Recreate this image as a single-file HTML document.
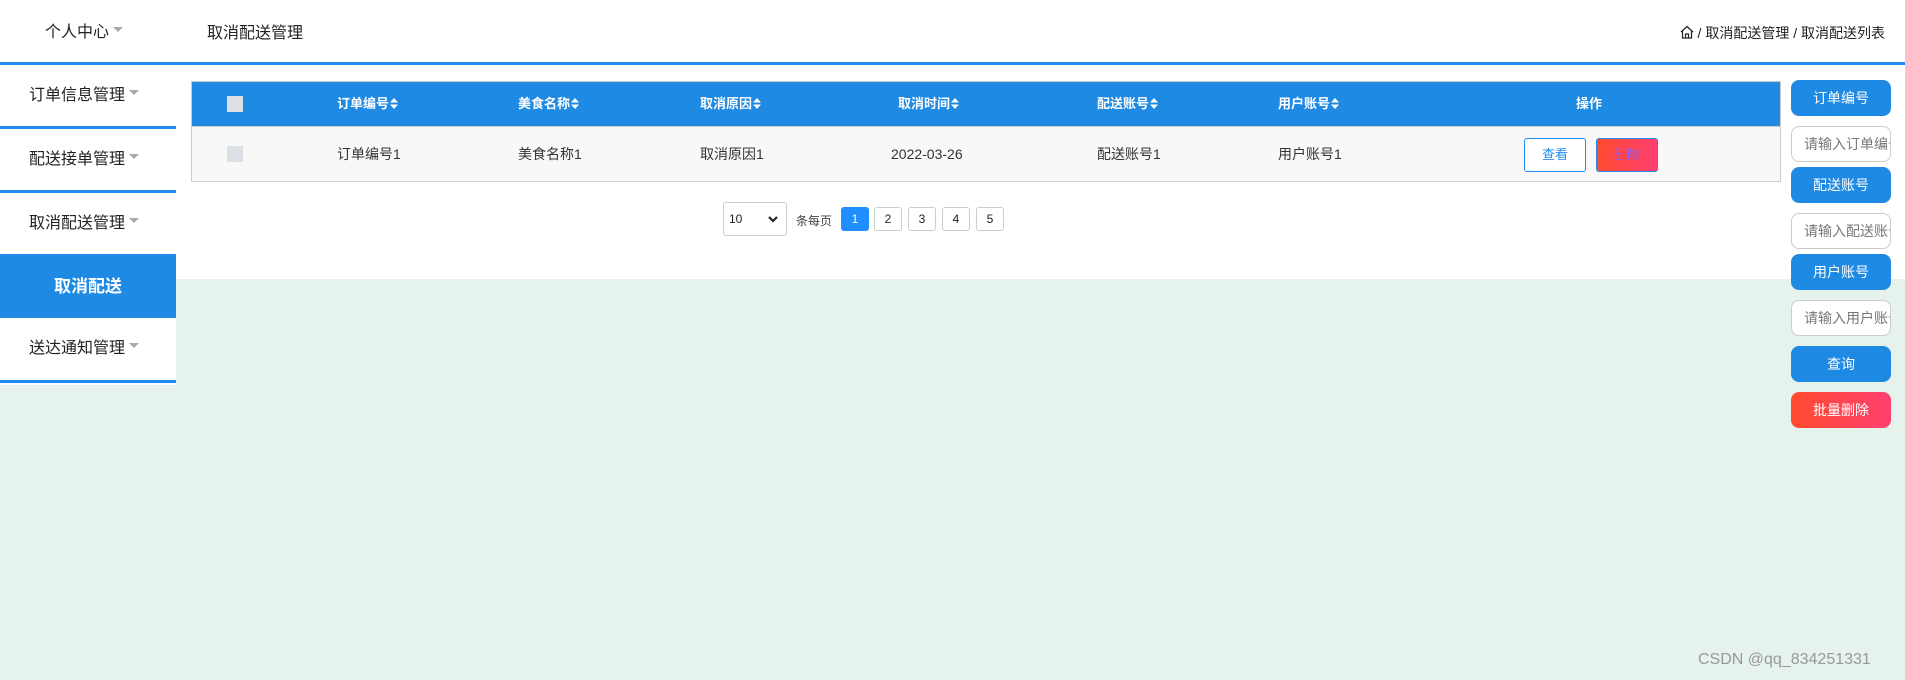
<!DOCTYPE html>
<html><head><meta charset="utf-8">
<style>
*{margin:0;padding:0;box-sizing:border-box}
body{width:1905px;height:680px;position:relative;background:#e6f2ec;font-family:"Liberation Sans","Noto Sans CJK SC",sans-serif;color:#333;overflow:hidden}
.a{position:absolute}
.tri{display:inline-block;width:0;height:0;border-left:5px solid transparent;border-right:5px solid transparent;border-top:5px solid #aaa;vertical-align:middle;margin-left:4px;position:relative;top:-3px}
.side{position:absolute;left:0;width:176px;height:64px;background:#fff;border-bottom:3px solid #1f8bf0;font-size:16px;color:#222;line-height:61px;padding-left:29px}
.th{position:absolute;top:81px;height:45px;line-height:45px;color:#fff;font-weight:bold;font-size:13px}
.td{position:absolute;top:127px;height:55px;line-height:55px;font-size:14px;color:#333}
.sort{display:inline-block;width:8px;height:11px;vertical-align:-1px;margin-left:1px}
.rb{position:absolute;left:1791px;width:100px;height:36px;border-radius:8px;background:#1f8ae3;color:#fff;font-size:14px;text-align:center;line-height:36px}
.ri{position:absolute;left:1791px;width:100px;height:36px;border-radius:8px;background:#fff;border:1px solid #ccc;color:#777;font-size:14px;line-height:34px;padding-left:12px;overflow:hidden;white-space:nowrap}
.pg{position:absolute;top:207px;width:28px;height:24px;border:1px solid #ccc;border-radius:3px;background:#fff;font-size:12px;text-align:center;line-height:22px;color:#222}
</style></head><body>
<div class="a" style="left:0;top:0;width:1905px;height:62px;background:#fff"></div>
<div class="a" style="left:0;top:62px;width:1905px;height:3px;background:#1f8bf0"></div>
<div class="a" style="left:45px;top:18px;font-size:16px;color:#222">个人中心<span class="tri"></span></div>
<div class="a" style="left:207px;top:19px;font-size:16px;color:#222">取消配送管理</div>
<div class="a" style="right:20px;top:23px;font-size:14px;color:#222">
<svg width="14" height="14" viewBox="0 0 14 14" style="vertical-align:-1px"><path d="M1 7 L7 1.5 L13 7 M2.5 5.8 V13 H11.5 V5.8 M5.5 13 V9 H8.5 V13" fill="none" stroke="#222" stroke-width="1.2"/></svg> / 取消配送管理 / 取消配送列表</div>

<div class="a" style="left:176px;top:65px;width:1729px;height:214px;background:#fff"></div>
<div class="a" style="left:0;top:65px;width:176px;height:320px;background:#fff"></div>
<div class="side" style="top:65px">订单信息管理<span class="tri"></span></div>
<div class="side" style="top:129px">配送接单管理<span class="tri"></span></div>
<div class="side" style="top:193px">取消配送管理<span class="tri"></span></div>
<div class="a" style="left:0;top:255px;width:176px;height:63px;background:#1f8ae3;color:#fff;font-weight:bold;font-size:17px;text-align:center;line-height:63px">取消配送</div>
<div class="side" style="top:318px;height:65px;line-height:62px">送达通知管理<span class="tri"></span></div>

<div class="a" style="left:191px;top:81px;width:1590px;height:101px;border:1px solid #ccc;background:#f8f8f8"></div>
<div class="a" style="left:192px;top:82px;width:1588px;height:44px;background:#1f8ae3"></div>
<div class="a" style="left:192px;top:126px;width:1588px;height:1px;background:#ccc"></div>
<div class="a" style="left:227px;top:96px;width:16px;height:16px;background:#dde0e6"></div>
<div class="a" style="left:227px;top:146px;width:16px;height:16px;background:#dde0e6"></div>
<div class="th" style="left:337px">订单编号<svg class="sort" viewBox="0 0 8 11"><path d="M0 4.5 L4 0 L8 4.5Z M0 6.5 L4 11 L8 6.5Z" fill="#fff"/></svg></div>
<div class="th" style="left:518px">美食名称<svg class="sort" viewBox="0 0 8 11"><path d="M0 4.5 L4 0 L8 4.5Z M0 6.5 L4 11 L8 6.5Z" fill="#fff"/></svg></div>
<div class="th" style="left:700px">取消原因<svg class="sort" viewBox="0 0 8 11"><path d="M0 4.5 L4 0 L8 4.5Z M0 6.5 L4 11 L8 6.5Z" fill="#fff"/></svg></div>
<div class="th" style="left:898px">取消时间<svg class="sort" viewBox="0 0 8 11"><path d="M0 4.5 L4 0 L8 4.5Z M0 6.5 L4 11 L8 6.5Z" fill="#fff"/></svg></div>
<div class="th" style="left:1097px">配送账号<svg class="sort" viewBox="0 0 8 11"><path d="M0 4.5 L4 0 L8 4.5Z M0 6.5 L4 11 L8 6.5Z" fill="#fff"/></svg></div>
<div class="th" style="left:1278px">用户账号<svg class="sort" viewBox="0 0 8 11"><path d="M0 4.5 L4 0 L8 4.5Z M0 6.5 L4 11 L8 6.5Z" fill="#fff"/></svg></div>
<div class="th" style="left:1576px">操作</div>
<div class="td" style="left:337px">订单编号1</div>
<div class="td" style="left:518px">美食名称1</div>
<div class="td" style="left:700px">取消原因1</div>
<div class="td" style="left:891px">2022-03-26</div>
<div class="td" style="left:1097px">配送账号1</div>
<div class="td" style="left:1278px">用户账号1</div>
<div class="a" style="left:1524px;top:138px;width:62px;height:34px;border:1px solid #1f8bf0;border-radius:3px;background:#fff;color:#1f8bf0;font-size:13px;text-align:center;line-height:32px">查看</div>
<div class="a" style="left:1596px;top:138px;width:62px;height:34px;border:1px solid #1f8bf0;border-radius:3px;background:linear-gradient(90deg,#ff4a2f,#ff4070);color:#8a5cf0;font-size:13px;text-align:center;line-height:32px">删除</div>

<div class="a" style="left:723px;top:202px;width:64px;height:34px;border:1px solid #ccc;border-radius:3px;background:#fff;font-size:12px;line-height:32px;padding-left:5px;color:#222">10<svg class="a" style="left:44px;top:13px" width="10" height="7" viewBox="0 0 10 7"><path d="M1 1 L5 5 L9 1" fill="none" stroke="#222" stroke-width="2.2"/></svg></div>
<div class="a" style="left:796px;top:212px;font-size:12px;color:#444">条每页</div>
<div class="pg" style="left:841px;background:#1f8fff;border-color:#1f8fff;color:#fff">1</div>
<div class="pg" style="left:874px">2</div>
<div class="pg" style="left:908px">3</div>
<div class="pg" style="left:942px">4</div>
<div class="pg" style="left:976px">5</div>

<div class="rb" style="top:80px">订单编号</div>
<div class="ri" style="top:126px">请输入订单编号</div>
<div class="rb" style="top:167px">配送账号</div>
<div class="ri" style="top:213px">请输入配送账号</div>
<div class="rb" style="top:254px">用户账号</div>
<div class="ri" style="top:300px">请输入用户账号</div>
<div class="rb" style="top:346px">查询</div>
<div class="rb" style="top:392px;background:linear-gradient(90deg,#ff4a2f,#ff4070)">批量删除</div>

<div class="a" style="left:1698px;top:651px;font-size:16px;color:#999">CSDN @qq_834251331</div>
</body></html>
